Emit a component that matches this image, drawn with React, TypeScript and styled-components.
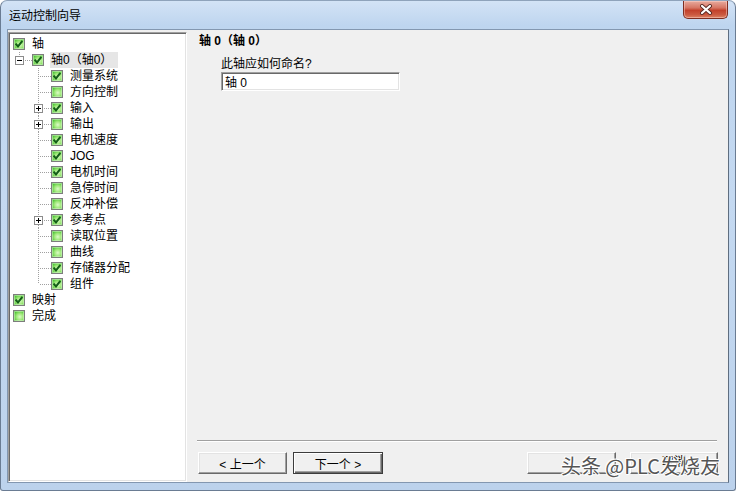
import React from 'react';
import styled, { createGlobalStyle } from 'styled-components';

const GlobalStyle = createGlobalStyle`
  html, body { margin: 0; padding: 0; background: #ffffff; }
  body {
    font-family: "Liberation Sans", "Noto Sans CJK SC", sans-serif;
    font-size: 12px;
    color: #000;
  }
  * { box-sizing: border-box; }
`;

const Window = styled.div`
  position: relative;
  width: 736px;
  height: 491px;
  display: flex;
  flex-direction: column;
  border: 1px solid #6a7c93;
  border-top-color: #8fa3bb;
  border-radius: 7px 7px 3px 3px;
  background: linear-gradient(180deg, #d3e3f6 0%, #bed5ef 5%, #c4d9f1 40%, #bcd2ec 100%);
  overflow: hidden;
`;

const TitleBar = styled.div`
  height: 28px;
  display: flex;
  align-items: flex-start;
  flex: none;
`;

const TitleText = styled.div`
  margin: 6px 0 0 8px;
  line-height: 16px;
  font-family: "Noto Sans CJK SC", sans-serif;
  font-size: 12px;
  color: #000;
`;

const CloseButton = styled.div`
  margin-left: auto;
  margin-right: 7px;
  width: 45px;
  height: 18px;
  display: flex;
  align-items: center;
  justify-content: center;
  border: 1px solid #7d2e22;
  border-top: none;
  border-radius: 0 0 5px 5px;
  background: linear-gradient(180deg, #e8ab9e 0%, #d67664 40%, #c2412b 55%, #cb5940 80%, #dc8163 100%);
  box-shadow: inset 0 0 0 1px rgba(255, 220, 210, 0.45);
`;

const Body = styled.div`
  flex: 1;
  display: flex;
  padding: 0 6px 7px 6px;
`;

const Client = styled.div`
  flex: 1;
  display: flex;
  background: #f0f0f0;
  border: 1px solid #8397b0;
  border-right-color: #5f6e80;
`;

const TreePanel = styled.div`
  width: 179px;
  margin-top: 2px;
  background: #ffffff;
  border: 1px solid;
  border-color: #a0a0a0 #ffffff #ffffff #a0a0a0;
  box-shadow: inset 1px 1px 0 #696969, inset -1px -1px 0 #e3e3e3;
  padding: 3px 1px 1px 1px;
  display: flex;
  flex-direction: column;
`;

const TreeRow = styled.div`
  height: 16px;
  display: flex;
  align-items: center;
  padding-left: 3px;
  white-space: nowrap;
`;

const Gutter = styled.svg`
  flex: none;
  display: block;
`;

const CheckBox = styled.span`
  flex: none;
  width: 12px;
  height: 12px;
  border: 1px solid #7d7d7d;
  background: radial-gradient(circle at 58% 58%, #dcfbc8 0%, #9fe87a 40%, #4cc234 78%, #2fa820 100%);
  box-shadow: inset 0 0 0 1px rgba(225, 250, 215, 0.5);
  display: flex;
  align-items: center;
  justify-content: center;
`;

const TreeLabel = styled.span<{ $selected?: boolean }>`
  margin-left: 6px;
  padding: 0 6px 0 1px;
  height: 16px;
  line-height: 16px;
  font-size: 12px;
  background: ${(p) => (p.$selected ? '#e6e6e6' : 'transparent')};
`;

const MainPanel = styled.div`
  flex: 1;
  display: flex;
  flex-direction: column;
  padding: 3px 0 8px 0;
`;

const Heading = styled.div`
  margin-left: 12px;
  line-height: 16px;
  font-size: 12px;
  font-weight: bold;
`;

const Field = styled.div`
  margin: 8px 0 0 34px;
  display: flex;
  flex-direction: column;
`;

const FieldLabel = styled.div`
  line-height: 14px;
  font-size: 12px;
`;

const TextInput = styled.input`
  margin-top: 1px;
  width: 179px;
  height: 19px;
  padding: 0 0 0 3px;
  font-family: "Liberation Sans", "Noto Sans CJK SC", sans-serif;
  font-size: 12px;
  color: #000;
  background: #fff;
  border: 1px solid;
  border-color: #a0a0a0 #ffffff #ffffff #a0a0a0;
  box-shadow: inset 1px 1px 0 #696969, inset -1px -1px 0 #e3e3e3;
  outline: none;
`;

const Spacer = styled.div`
  flex: 1;
`;

const Separator = styled.div`
  margin: 0 11px 0 10px;
  height: 2px;
  border-top: 1px solid #a0a0a0;
  border-bottom: 1px solid #ffffff;
`;

const ButtonRow = styled.div`
  position: relative;
  margin-top: 10px;
  height: 22px;
  padding: 0 10px 0 11px;
  display: flex;
  gap: 6px;
`;

const Push = styled.div`
  flex: 1;
`;

const Button = styled.div<{ $w: number; $default?: boolean }>`
  width: ${(p) => p.$w}px;
  height: 22px;
  display: flex;
  align-items: center;
  justify-content: center;
  font-size: 12px;
  background: #f0f0f0;
  border: 1px solid;
  border-color: ${(p) => (p.$default ? '#3c3c3c' : '#ffffff #696969 #696969 #ffffff')};
  box-shadow: ${(p) =>
    p.$default
      ? 'inset 1px 1px 0 #ffffff, inset -1px -1px 0 #696969, inset -2px -2px 0 #a0a0a0'
      : 'inset -1px -1px 0 #a0a0a0, inset 1px 1px 0 #e3e3e3'};
`;

const CancelLabel = styled.span`
  margin-top: -6px;
`;

const RightGap = styled.div`
  width: 2px;
`;

const Watermark = styled.div`
  position: absolute;
  right: 8px;
  top: 2px;
  font-family: "Noto Sans CJK SC", sans-serif;
  font-size: 20px;
  line-height: 24px;
  color: #555555;
  white-space: nowrap;
  text-shadow: 1px 0 0 #fff, -1px 0 0 #fff, 0 1px 0 #fff, 0 -1px 0 #fff, 1px 1px 1px #fff, -1px -1px 1px #fff;
`;

type Row = {
  level: number;
  text: string;
  checked: boolean;
  toggle?: 'plus' | 'minus';
  selected?: boolean;
  last?: boolean;
};

const rows: Row[] = [
  { level: 0, text: '轴', checked: true },
  { level: 1, text: '轴0（轴0）', checked: true, toggle: 'minus', selected: true },
  { level: 2, text: '测量系统', checked: true },
  { level: 2, text: '方向控制', checked: false },
  { level: 2, text: '输入', checked: true, toggle: 'plus' },
  { level: 2, text: '输出', checked: false, toggle: 'plus' },
  { level: 2, text: '电机速度', checked: true },
  { level: 2, text: 'JOG', checked: true },
  { level: 2, text: '电机时间', checked: true },
  { level: 2, text: '急停时间', checked: false },
  { level: 2, text: '反冲补偿', checked: false },
  { level: 2, text: '参考点', checked: true, toggle: 'plus' },
  { level: 2, text: '读取位置', checked: false },
  { level: 2, text: '曲线', checked: false },
  { level: 2, text: '存储器分配', checked: true },
  { level: 2, text: '组件', checked: true, last: true },
  { level: 0, text: '映射', checked: true },
  { level: 0, text: '完成', checked: false },
];

const DOT = '#a0a0a0';

function ToggleBox({ x, kind }: { x: number; kind: 'plus' | 'minus' }) {
  return (
    <g>
      <rect x={x + 0.5} y={4.5} width={8} height={8} fill="#fff" stroke="#8c8c8c" strokeWidth={1} />
      <line x1={x + 2} y1={8.5} x2={x + 7} y2={8.5} stroke="#000" strokeWidth={1} />
      {kind === 'plus' && <line x1={x + 4.5} y1={6} x2={x + 4.5} y2={11} stroke="#000" strokeWidth={1} />}
    </g>
  );
}

function TreeGutter({ row }: { row: Row }) {
  if (row.level === 0) return null;
  const width = row.level * 19;
  const cx = (row.level - 1) * 19 + 6.5;
  const boxX = cx - 4.5;
  const hasBox = !!row.toggle;
  const vEnd = row.last ? 8 : 16;
  return (
    <Gutter width={width} height={16} viewBox={`0 0 ${width} 16`}>
      {row.level === 1 ? (
        <line x1={cx} y1={0} x2={cx} y2={4} stroke={DOT} strokeDasharray="1 1" />
      ) : hasBox ? (
        <>
          <line x1={cx} y1={0} x2={cx} y2={4} stroke={DOT} strokeDasharray="1 1" />
          <line x1={cx} y1={13} x2={cx} y2={16} stroke={DOT} strokeDasharray="1 1" />
        </>
      ) : (
        <line x1={cx} y1={0} x2={cx} y2={vEnd} stroke={DOT} strokeDasharray="1 1" />
      )}
      <line
        x1={hasBox ? boxX + 10 : cx + 1.5}
        y1={8.5}
        x2={width}
        y2={8.5}
        stroke={DOT}
        strokeDasharray="1 1"
      />
      {hasBox && row.toggle && <ToggleBox x={boxX} kind={row.toggle} />}
    </Gutter>
  );
}

function Check({ checked }: { checked: boolean }) {
  return (
    <CheckBox>
      {checked && (
        <svg width="8" height="8" viewBox="0 0 8 8">
          <polyline points="0.6,3.6 3,6.4 7.4,1" fill="none" stroke="#135e17" strokeWidth={2} />
        </svg>
      )}
    </CheckBox>
  );
}

export default function App() {
  return (
    <>
      <GlobalStyle />
      <Window>
        <TitleBar>
          <TitleText>运动控制向导</TitleText>
          <CloseButton>
            <svg width="14" height="11" viewBox="0 0 14 11">
              <path d="M3 2 L11 9 M11 2 L3 9" stroke="#5a2a24" strokeWidth={4} strokeLinecap="round" />
              <path d="M3 2 L11 9 M11 2 L3 9" stroke="#ffffff" strokeWidth={2.2} strokeLinecap="round" />
            </svg>
          </CloseButton>
        </TitleBar>
        <Body>
          <Client>
            <TreePanel>
              {rows.map((row, i) => (
                <TreeRow key={i}>
                  <TreeGutter row={row} />
                  <Check checked={row.checked} />
                  <TreeLabel $selected={row.selected}>{row.text}</TreeLabel>
                </TreeRow>
              ))}
            </TreePanel>
            <MainPanel>
              <Heading>轴 0（轴 0）</Heading>
              <Field>
                <FieldLabel>此轴应如何命名?</FieldLabel>
                <TextInput readOnly value="轴 0" />
              </Field>
              <Spacer />
              <Separator />
              <ButtonRow>
                <Button $w={89}>&lt; 上一个</Button>
                <Button $w={90} $default>
                  下一个 &gt;
                </Button>
                <Push />
                <Button $w={89} />
                <RightGap />
                <Button $w={88}>
                  <CancelLabel>取消</CancelLabel>
                </Button>
                <Watermark>头条 @PLC发烧友</Watermark>
              </ButtonRow>
            </MainPanel>
          </Client>
        </Body>
      </Window>
    </>
  );
}
